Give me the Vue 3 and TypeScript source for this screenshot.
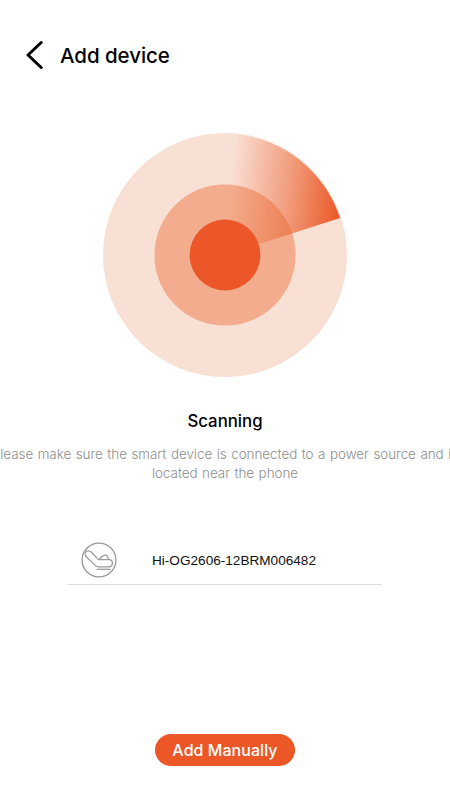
<script setup lang="ts">
const title: string = 'Add device'
const deviceName: string = 'Hi-OG2606-12BRM006482'
const hint: string[] = [
  'Please make sure the smart device is connected to a power source and is',
  'located near the phone',
]
</script>

<template>
  <main class="screen">
    <header class="bar">
      <svg class="back" width="18" height="30" viewBox="0 0 18 30" aria-label="Back">
        <path d="M15.2 2.5 L2 15 L15.2 27.5" />
      </svg>
      <h1>{{ title }}</h1>
    </header>

    <svg class="radar" width="246" height="246" viewBox="0 0 246 246">
      <defs>
        <linearGradient id="sweep" gradientUnits="userSpaceOnUse" x1="124" y1="98" x2="236" y2="109">
          <stop offset="0" stop-color="#ea5628" stop-opacity="0" />
          <stop offset="0.5" stop-color="#ea5f2c" stop-opacity="0.5" />
          <stop offset="0.8" stop-color="#ea5c2a" stop-opacity="0.82" />
          <stop offset="1" stop-color="#ea5424" />
        </linearGradient>
      </defs>
      <circle cx="123" cy="123" r="122" fill="#f9e0d5" />
      <circle cx="123" cy="123" r="70.6" fill="#f3ad8e" />
      <path d="M123 123 L134 2.5 A121 121 0 0 1 238 86 Z" fill="url(#sweep)" />
      <circle cx="123" cy="123" r="35.4" fill="#eb5728" />
    </svg>

    <h2>Scanning</h2>
    <p class="hint">
      <span v-for="line in hint" :key="line">{{ line }}</span>
    </p>

    <section class="device">
      <svg class="chair" width="36" height="36" viewBox="0 0 36 36">
        <circle cx="18" cy="18" r="16.9" />
        <path d="M4.8 14.2 C3.2 11.6 4.4 8.8 7.2 8.8 C8.8 8.8 9.8 9.5 10.7 10.5 L17.4 17.6 H28 C30.4 17.6 31.4 19.2 31.4 21 C31.4 23.4 29.7 24.8 27.6 24.8 H17.5 C16 24.8 15 24.1 14 23.1 Z" />
        <path d="M18.9 17.4 C19 15.4 20.3 14.9 21.2 14.7 C23 12.4 26.3 12.8 26.9 15.4 L27.6 17.4" />
        <path d="M15.7 27.3 H29.5" />
      </svg>
      <span class="name">{{ deviceName }}</span>
    </section>

    <button class="manual" type="button">Add Manually</button>
  </main>
</template>

<style>
body {
  background: #fff;
}
</style>

<style scoped>
.screen {
  display: flex;
  flex-direction: column;
  align-items: center;
  box-sizing: border-box;
  width: 450px;
  height: 800px;
  overflow: hidden;
  background: #fff;
  color: #000;
  font-family: Inter, 'Liberation Sans', sans-serif;
}

.bar {
  display: flex;
  align-items: center;
  gap: 16px;
  width: 100%;
  height: 30px;
  margin-top: 40px;
  padding-left: 26px;
  box-sizing: border-box;
}

.back {
  fill: none;
  stroke: #000;
  stroke-width: 3;
  stroke-linecap: round;
  stroke-linejoin: round;
}

h1 {
  margin: 0;
  padding-top: 1px;
  font-size: 20.5px;
  line-height: 30px;
  font-weight: 450;
  letter-spacing: -0.05px;
}

.radar {
  flex: none;
  margin-top: 62px;
}

h2 {
  margin: 31px 0 0;
  font-size: 16.8px;
  line-height: 24px;
  font-weight: 500;
  letter-spacing: 0;
}

.hint {
  display: flex;
  flex-direction: column;
  align-items: center;
  margin: 12px 0 0;
  color: #8e8e8e;
  font-size: 13.4px;
  line-height: 19px;
  font-weight: 300;
  letter-spacing: -0.02px;
  word-spacing: 0.8px;
  white-space: nowrap;
}

.device {
  display: flex;
  align-items: center;
  gap: 35px;
  box-sizing: border-box;
  width: 315px;
  height: 50px;
  margin: 52px 1px 0 0;
  padding: 1px 0 0 14px;
  border-bottom: 1px solid #dedede;
}

.chair {
  flex: none;
  fill: none;
  stroke: #999;
  stroke-width: 1.3;
  stroke-linejoin: round;
}

.name {
  padding-top: 2px;
  font-family: 'Liberation Sans', Arial, sans-serif;
  font-size: 13.6px;
  line-height: 20px;
  color: #111;
}

.manual {
  width: 140px;
  height: 32px;
  margin-top: 149px;
  padding: 0;
  border: 0;
  border-radius: 16px;
  background: #ec5728;
  color: #fff;
  font: 500 16px/32px Inter, sans-serif;
  letter-spacing: 0.05px;
}
</style>
